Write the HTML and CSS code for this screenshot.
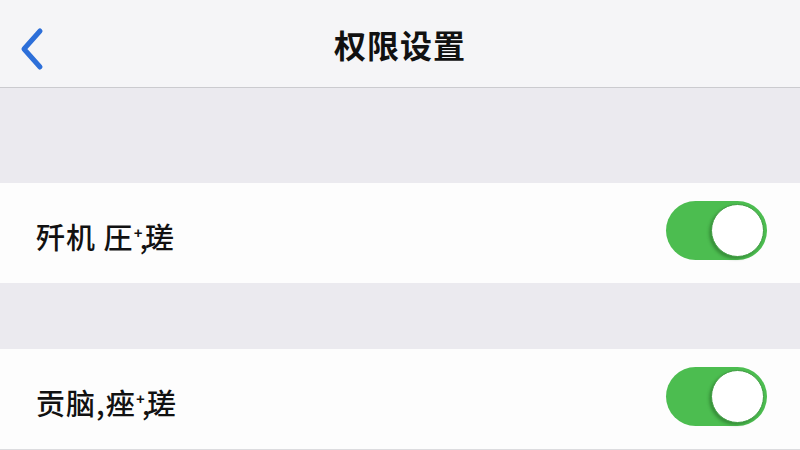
FILE: index.html
```html
<!DOCTYPE html>
<html lang="zh-CN">
<head>
    <meta charset="UTF-8">
    <meta name="viewport" content="width=device-width, initial-scale=1.0">
    <title>权限设置</title>
    <link rel="stylesheet" href="styles.css">
</head>
<body>

    <!-- Navigation bar -->
    <div class="nav-bar">
        <a class="nav-back" href="#">
            <svg width="28" height="44" viewBox="0 0 28 44">
                <polyline points="22,4 6,22 22,40" fill="none" stroke="#2d6fd9" stroke-width="5" stroke-linecap="round" stroke-linejoin="round"/>
            </svg>
        </a>
        <h1 class="nav-title">权限设置</h1>
    </div>

    <div class="group-gap"></div>

    <div class="setting-row">
        <span class="setting-label">歼机 圧<span class="mark">⁺,</span>瑳</span>
        <label class="switch on"><span class="knob"></span></label>
    </div>

    <div class="group-gap small"></div>

    <div class="setting-row last">
        <span class="setting-label">贡脑,痤<span class="mark">⁺,</span>瑳</span>
        <label class="switch on"><span class="knob"></span></label>
    </div>

</body>
</html>
```

FILE: styles.css
```css
/* General Styling */
body {
    margin: 0;
    padding: 0;
    background-color: #ebeaef;
    font-family: "Noto Sans CJK SC", "Noto Sans", sans-serif;
    color: #111;
}

/* Navigation bar */
.nav-bar {
    position: relative;
    height: 87px;
    background-color: #f5f5f7;
    border-bottom: 1px solid #cbcbcf;
    display: flex;
    align-items: center;
    justify-content: center;
}

.nav-back {
    position: absolute;
    left: 18px;
    top: 27px;
    display: block;
    height: 44px;
}

.nav-title {
    margin: 0;
    font-size: 32px;
    font-weight: 700;
    letter-spacing: 1px;
    color: #111;
}

/* Grouped list */
.group-gap {
    height: 95px;
    background-color: #ebeaef;
}

.group-gap.small {
    height: 66px;
}

.setting-row {
    height: 100px;
    background-color: #fdfdfd;
    display: flex;
    align-items: center;
    justify-content: space-between;
    padding: 0 33px 0 36px;
}

.setting-row.last {
    border-bottom: 2px solid #dcdcdf;
}

.setting-label {
    font-size: 29px;
    font-weight: 500;
    letter-spacing: 1px;
    padding-top: 6px;
}

.setting-label .mark {
    font-size: 27px;
    letter-spacing: -3px;
}

/* Toggle switch */
.switch {
    width: 101px;
    height: 59px;
    border-radius: 30px;
    background-color: #e5e5ea;
    display: flex;
    align-items: center;
    box-sizing: border-box;
    padding: 0 3px;
    margin-top: -6px;
}

.switch.on {
    background-color: #4cbd50;
    justify-content: flex-end;
}

.knob {
    width: 53px;
    height: 53px;
    border-radius: 50%;
    background-color: #fff;
    box-sizing: border-box;
    border: 1px solid #3f9c42;
    box-shadow: -2px 2px 3px rgba(30, 90, 30, 0.45);
}
```
